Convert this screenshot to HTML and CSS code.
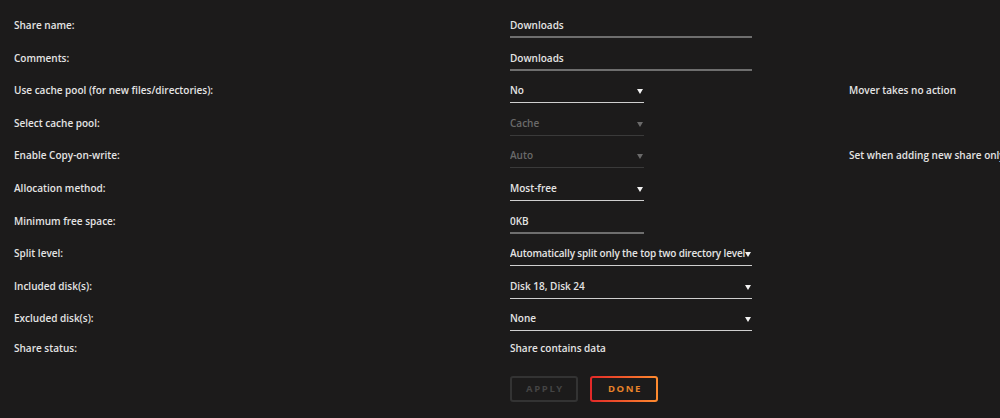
FILE: index.html
```html
<!DOCTYPE html>
<html lang="en">
<head>
  <meta charset="UTF-8">
  <meta name="viewport" content="width=device-width, initial-scale=1.0">
  <title>Share Settings</title>
  <link rel="stylesheet" href="styles.css">
</head>
<body>
  <form class="share-form">
    <div class="row">
      <span class="label">Share name:</span>
      <div class="field"><div class="input wide">Downloads</div></div>
    </div>
    <div class="row">
      <span class="label">Comments:</span>
      <div class="field"><div class="input wide">Downloads</div></div>
    </div>
    <div class="row">
      <span class="label">Use cache pool (for new files/directories):</span>
      <div class="field"><div class="select">No</div></div>
      <span class="info">Mover takes no action</span>
    </div>
    <div class="row">
      <span class="label">Select cache pool:</span>
      <div class="field"><div class="select disabled">Cache</div></div>
    </div>
    <div class="row">
      <span class="label">Enable Copy-on-write:</span>
      <div class="field"><div class="select disabled">Auto</div></div>
      <span class="info">Set when adding new share only</span>
    </div>
    <div class="row">
      <span class="label">Allocation method:</span>
      <div class="field"><div class="select">Most-free</div></div>
    </div>
    <div class="row">
      <span class="label">Minimum free space:</span>
      <div class="field"><div class="input">0KB</div></div>
    </div>
    <div class="row">
      <span class="label">Split level:</span>
      <div class="field"><div class="select wide tight">Automatically split only the top two directory level</div></div>
    </div>
    <div class="row">
      <span class="label">Included disk(s):</span>
      <div class="field"><div class="select wide">Disk 18, Disk 24</div></div>
    </div>
    <div class="row">
      <span class="label">Excluded disk(s):</span>
      <div class="field"><div class="select wide">None</div></div>
    </div>
    <div class="row status">
      <span class="label">Share status:</span>
      <div class="field"><span class="plain">Share contains data</span></div>
    </div>
    <div class="actions">
      <button type="button" class="btn" disabled>Apply</button>
      <button type="button" class="btn done">Done</button>
    </div>
  </form>
</body>
</html>
```

FILE: styles.css
```css
body {
  margin: 0;
  padding: 9px 0 0 14px;
  background-color: #1c1b1b;
  color: #e4e4e4;
  font-family: "Open Sans", "Liberation Sans", sans-serif;
  font-size: 10px;
  font-weight: 600;
  overflow: hidden;
}
.row {
  display: flex;
  align-items: flex-start;
  height: 32.6px;
}
.label {
  width: 496px;
  flex: none;
  padding-top: 6px;
  line-height: 20px;
}
.field {
  width: 339px;
  flex: none;
  padding-top: 6px;
}
.info {
  padding-top: 6px;
  line-height: 20px;
  white-space: nowrap;
}
.input,
.select {
  position: relative;
  width: 134px;
  line-height: 20px;
  padding-bottom: 2px;
  border-bottom: 1px solid #8a8a8a;
  white-space: nowrap;
  overflow: hidden;
}
.input {
  border-bottom: 2px solid #6e6e6e;
  padding-bottom: 1px;
}
.wide {
  width: 242px;
}
.select {
  border-bottom-color: #cfcfcf;
}
.select.tight {
  letter-spacing: -0.15px;
}
.select::after {
  content: "";
  position: absolute;
  right: 1px;
  top: 9px;
  border-left: 3px solid transparent;
  border-right: 3px solid transparent;
  border-top: 5px solid #f2f2f2;
}
.select.disabled {
  color: #6a6a6a;
  border-bottom-color: #3a3a3a;
}
.select.disabled::after {
  border-top-color: #6a6a6a;
}
.plain {
  line-height: 20px;
}
.row.status {
  height: 28px;
  margin-top: -3px;
}
.actions {
  display: flex;
  gap: 12px;
  margin: 16px 0 0 496px;
}
.btn {
  width: 68px;
  height: 26px;
  border-radius: 3px;
  font-family: "Open Sans", "Liberation Sans", sans-serif;
  font-size: 9.5px;
  font-weight: 700;
  letter-spacing: 1.6px;
  text-transform: uppercase;
  padding: 0 0 0 2px;
  color: #444;
  background: transparent;
  border: 2px solid #333;
}
.btn.done {
  color: #e8832a;
  border: 2px solid transparent;
  background: linear-gradient(#1c1b1b, #1c1b1b) padding-box,
              linear-gradient(90deg, #e22828, #ff8c2f) border-box;
}
```
